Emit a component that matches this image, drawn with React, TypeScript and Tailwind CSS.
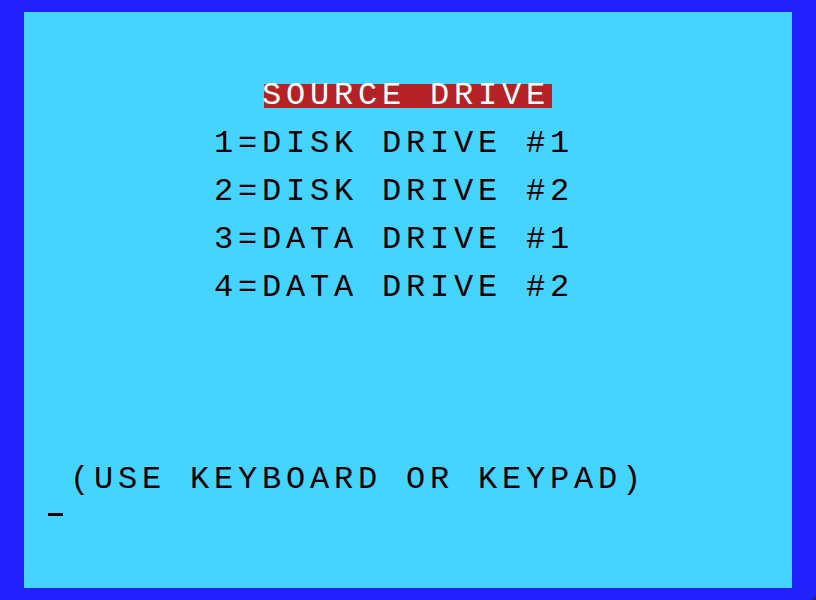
// TI-style 32x24 text screen: each character cell is 24x24 px (8x8 pixels at 3x)
const CELL = 24;

type Line = { row: number; col: number; text: string; inverse?: boolean };

const lines: Line[] = [
  { row: 3, col: 10, text: 'SOURCE DRIVE', inverse: true },
  { row: 5, col: 8, text: '1=DISK DRIVE #1' },
  { row: 7, col: 8, text: '2=DISK DRIVE #2' },
  { row: 9, col: 8, text: '3=DATA DRIVE #1' },
  { row: 11, col: 8, text: '4=DATA DRIVE #2' },
  { row: 19, col: 2, text: '(USE KEYBOARD OR KEYPAD)' },
];

const CURSOR_ROW = 20;

function ScreenRow({ line }: { line?: Line }) {
  if (!line) return <div className="h-[24px]" />;
  return (
    <div className="flex h-[24px]">
      <div className="shrink-0" style={{ width: line.col * CELL }} />
      <span
        className={
          'inline-block h-[24px] ' +
          (line.inverse ? 'bg-[#b52226] text-white' : 'text-black')
        }
        style={{ width: line.text.length * CELL }}
      >
        {/* glyphs sit in the left part of each cell, so pull the text back a little */}
        <span className='-ml-[2px] block whitespace-pre font-["Liberation_Mono",monospace] text-[32px] leading-[24px] tracking-[4.8px]'>
          {line.text}
        </span>
      </span>
    </div>
  );
}

export default function App() {
  const rows = Array.from({ length: 24 }, (_, r) => r);

  return (
    <div className="w-[816px] h-[600px] bg-[#2b2b2b]">
      <div className="w-[816px] h-[600px] bg-[#2121ff] px-[24px] py-[12px] rounded-br-[6px]">
        <div className="w-[768px] h-[576px] bg-[#44d4ff] flex flex-col">
          {rows.map((r) =>
            r === CURSOR_ROW ? (
              <div key={r} className="h-[24px] pl-[24px] flex items-end">
                <div className="w-[15px] h-[3px] bg-black" />
              </div>
            ) : (
              <ScreenRow key={r} line={lines.find((l) => l.row === r)} />
            )
          )}
        </div>
      </div>
    </div>
  );
}
